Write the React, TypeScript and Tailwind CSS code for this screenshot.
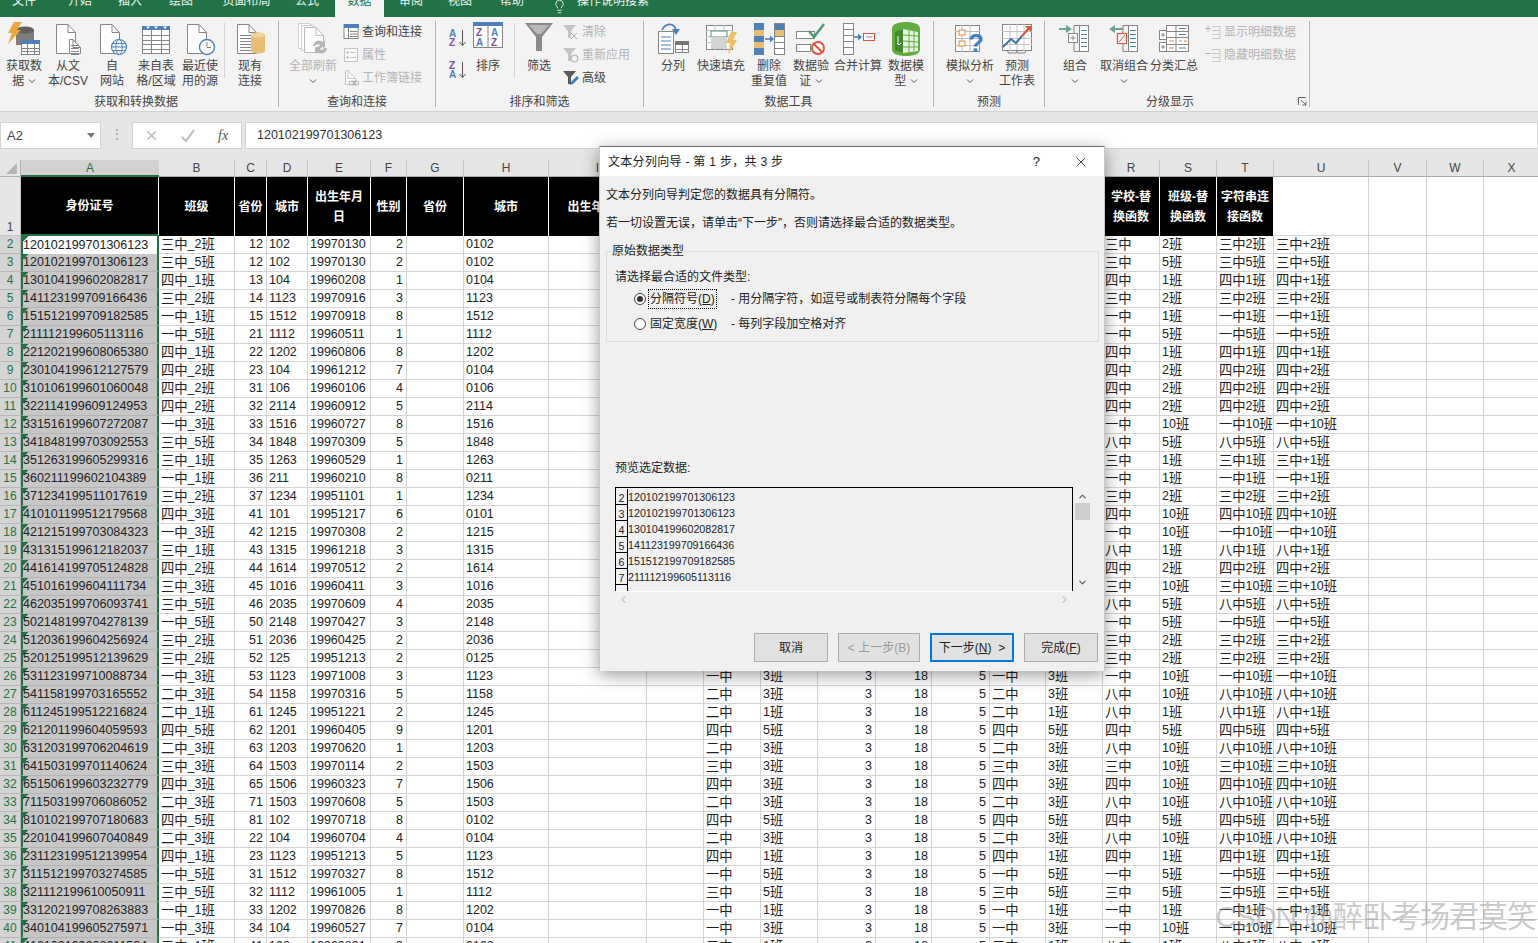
import type { ReactNode } from "react";
import { ChevronDown, ChevronLeft, ChevronRight, ChevronUp, Lightbulb, X } from "lucide-react";

const BLUE = "#4f81b9";
const GRAY = "#858585";
const TAN = "#e8bd74";
const TEAL = "#6fa58c";
const RED = "#d8553c";

// id|class|prov|city|birth|sex|code|school|grade
const RAW = [
  "120102199701306123|三中_2班|12|102|19970130|2|0102|三中|2班",
  "120102199701306123|三中_5班|12|102|19970130|2|0102|三中|5班",
  "130104199602082817|四中_1班|13|104|19960208|1|0104|四中|1班",
  "141123199709166436|三中_2班|14|1123|19970916|3|1123|三中|2班",
  "151512199709182585|一中_1班|15|1512|19970918|8|1512|一中|1班",
  "211112199605113116|一中_5班|21|1112|19960511|1|1112|一中|5班",
  "221202199608065380|四中_1班|22|1202|19960806|8|1202|四中|1班",
  "230104199612127579|四中_2班|23|104|19961212|7|0104|四中|2班",
  "310106199601060048|四中_2班|31|106|19960106|4|0106|四中|2班",
  "322114199609124953|四中_2班|32|2114|19960912|5|2114|四中|2班",
  "331516199607272087|一中_3班|33|1516|19960727|8|1516|一中|10班",
  "341848199703092553|三中_5班|34|1848|19970309|5|1848|八中|5班",
  "351263199605299316|三中_1班|35|1263|19960529|1|1263|三中|1班",
  "360211199602104389|一中_1班|36|211|19960210|8|0211|一中|1班",
  "371234199511017619|三中_2班|37|1234|19951101|1|1234|三中|2班",
  "410101199512179568|四中_3班|41|101|19951217|6|0101|四中|10班",
  "421215199703084323|一中_3班|42|1215|19970308|2|1215|一中|10班",
  "431315199612182037|三中_1班|43|1315|19961218|3|1315|八中|1班",
  "441614199705124828|四中_2班|44|1614|19970512|2|1614|四中|2班",
  "451016199604111734|三中_3班|45|1016|19960411|3|1016|三中|10班",
  "462035199706093741|三中_5班|46|2035|19970609|4|2035|八中|5班",
  "502148199704278139|一中_5班|50|2148|19970427|3|2148|一中|5班",
  "512036199604256924|三中_2班|51|2036|19960425|2|2036|三中|2班",
  "520125199512139629|三中_2班|52|125|19951213|2|0125|三中|2班",
  "531123199710088734|一中_3班|53|1123|19971008|3|1123|一中|10班",
  "541158199703165552|二中_3班|54|1158|19970316|5|1158|八中|10班",
  "611245199512216824|二中_1班|61|1245|19951221|2|1245|八中|1班",
  "621201199604059593|四中_5班|62|1201|19960405|9|1201|四中|5班",
  "631203199706204619|二中_3班|63|1203|19970620|1|1203|八中|10班",
  "641503199701140624|三中_3班|64|1503|19970114|2|1503|三中|10班",
  "651506199603232779|四中_3班|65|1506|19960323|7|1506|四中|10班",
  "711503199706086052|二中_3班|71|1503|19970608|5|1503|八中|10班",
  "810102199707180683|四中_5班|81|102|19970718|8|0102|四中|5班",
  "220104199607040849|二中_3班|22|104|19960704|4|0104|八中|10班",
  "231123199512139954|四中_1班|23|1123|19951213|5|1123|四中|1班",
  "311512199703274585|一中_5班|31|1512|19970327|8|1512|一中|5班",
  "321112199610050911|三中_5班|32|1112|19961005|1|1112|三中|5班",
  "331202199708263883|一中_1班|33|1202|19970826|8|1202|一中|1班",
  "340104199605275971|一中_3班|34|104|19960527|7|0104|一中|10班",
  "410102199608211534|二中_1班|41|102|19960821|3|0102|八中|1班",
];

const COLUMNS = "ABCDEFGHIJKLMNOPQRSTUVWX".split("");
const RIGHT_ALIGNED = new Set(["C", "F", "M", "N", "O"]);

const HEADERS: Record<string, string> = {
  A: "身份证号",
  B: "班级",
  C: "省份",
  D: "城市",
  E: "出生年月日",
  F: "性别",
  G: "省份",
  H: "城市",
  I: "出生年月日",
  J: "性别",
  K: "学校",
  L: "班级",
  M: "省份",
  N: "城市",
  O: "性别",
  P: "学校",
  Q: "班级",
  R: "学校-替换函数",
  S: "班级-替换函数",
  T: "字符串连接函数",
};

const rowValues = (raw: string): Record<string, string> => {
  const [id, cls, prov, city, birth, sex, code, school, grade] = raw.split("|");
  const [k, l] = cls.split("_");
  return {
    A: id, B: cls, C: prov, D: city, E: birth, F: sex, H: code,
    K: k, L: l, M: "3", N: "18", O: "5", P: k, Q: l,
    R: school, S: grade, T: school + grade, U: `${school}+${grade}`,
  };
};

// digits are narrower in the sheet font than the CJK next to them
const Mixed = ({ text }: { text: string }) => (
  <>
    {text.split(/([\u4e00-\u9fff]+)/).map((part, i) =>
      /[\u4e00-\u9fff]/.test(part) ? (
        <span key={i} className="text-[13.3px]">{part}</span>
      ) : (
        <span key={i}>{part}</span>
      )
    )}
  </>
);

/* ---------- icon pieces ---------- */

const Doc = ({ x = 0, y = 0, w = 20, h = 30, stroke = GRAY, fill = "#fff" }: { x?: number; y?: number; w?: number; h?: number; stroke?: string; fill?: string }) => (
  <g transform={`translate(${x} ${y})`} fill="none" stroke={stroke}>
    <path d={`M.5 .5H${w - 8}L${w - 0.5} 8.5V${h - 0.5}H.5Z`} fill={fill} />
    <path d={`M${w - 8} .5V8.5H${w - 0.5}`} />
  </g>
);

const Table = ({ x, y, w, h, rows, cols, head = BLUE, stroke = GRAY }: { x: number; y: number; w: number; h: number; rows: number; cols: number; head?: string; stroke?: string }) => (
  <g>
    <rect x={x + 0.5} y={y + 0.5} width={w - 1} height={h - 1} fill="#fff" stroke={stroke} />
    <rect x={x} y={y} width={w} height={4} fill={head} />
    {Array.from({ length: rows - 1 }, (_, i) => {
      const yy = Math.round(y + 4 + ((h - 4) * (i + 1)) / rows) + 0.5;
      return <path key={i} d={`M${x} ${yy}H${x + w}`} stroke={stroke} />;
    })}
    {Array.from({ length: cols - 1 }, (_, i) => {
      const xx = Math.round(x + (w * (i + 1)) / cols) + 0.5;
      return <path key={i} d={`M${xx} ${y + 4}V${y + h}`} stroke={stroke} />;
    })}
  </g>
);

const Lines = ({ x, y, w, n, gap = 3, color = GRAY }: { x: number; y: number; w: number; n: number; gap?: number; color?: string }) => (
  <path d={Array.from({ length: n }, (_, i) => `M${x} ${y + i * gap + 0.5}h${w}`).join("")} stroke={color} />
);

const Big = ({ children }: { children: ReactNode }) => (
  <svg width="34" height="34" viewBox="0 0 34 34">{children}</svg>
);

const Small = ({ children }: { children: ReactNode }) => (
  <svg width="16" height="16" viewBox="0 0 16 16" className="shrink-0">{children}</svg>
);

const GetDataIcon = () => (
  <Big>
    <path d="M9 9a9 3.5 0 0 1 18 0v14H9Z" fill="#7c7c7c" />
    <ellipse cx="18" cy="8" rx="9" ry="3.5" fill="#5f5f5f" />
    <polygon points="7,0 15,0 10,8 14,8 1,22 5,11 1,11" fill="#eba83d" />
    <Table x={14} y={18} w={19} h={15} rows={3} cols={3} />
  </Big>
);
const FromTextIcon = () => (
  <Big>
    <Doc x={5} y={2} w={20} h={30} />
    <Doc x={18} y={17} w={12} h={15} />
    <Lines x={20} y={23} w={8} n={4} />
  </Big>
);
const WebIcon = () => (
  <Big>
    <Doc x={5} y={2} w={20} h={30} />
    <circle cx="24" cy="25" r="7.5" fill="#fff" stroke={BLUE} strokeWidth="1.2" />
    <ellipse cx="24" cy="25" rx="3.2" ry="7.5" fill="none" stroke={BLUE} />
    <path d="M16.5 25h15M17.5 21.5h13M17.5 28.5h13" stroke={BLUE} />
  </Big>
);
const FromTableIcon = () => (
  <Big>
    <Table x={3} y={4} w={28} h={28} rows={5} cols={3} />
    <path d="M7 4.5h4l-2 2.5ZM15 4.5h4l-2 2.5ZM24 4.5h4l-2 2.5Z" fill="#fff" />
  </Big>
);
const RecentIcon = () => (
  <Big>
    <Doc x={4} y={2} w={20} h={30} />
    <circle cx="24" cy="25" r="7.5" fill="#fff" stroke={BLUE} strokeWidth="1.4" />
    <path d="M24 20v5.5h4" fill="none" stroke={GRAY} />
  </Big>
);
const ExistingIcon = () => (
  <Big>
    <Doc x={4} y={2} w={20} h={30} />
    <Lines x={7} y={13} w={14} n={6} />
    <path d="M18 13a7 2.5 0 0 1 14 0v16a7 2.5 0 0 1-14 0Z" fill={TAN} />
    <ellipse cx="25" cy="13" rx="7" ry="2.5" fill="#f0d39c" />
  </Big>
);
const RefreshAllIcon = () => (
  <Big>
    <Doc x={2} y={1} w={20} h={26} stroke="#cfcfcf" />
    <Doc x={5} y={3} w={20} h={26} stroke="#cfcfcf" />
    <Doc x={8} y={5} w={20} h={26} stroke="#bdbdbd" />
    <path d="M17 24a6 6 0 0 1 10-4l2-2v7h-7l2-2a3.4 3.4 0 0 0-5 1ZM31 26a6 6 0 0 1-10 4l-2 2v-7h7l-2 2a3.4 3.4 0 0 0 5-1Z" fill="#b5b5b5" />
  </Big>
);
const QueryIcon = () => (
  <Small>
    <rect x="1" y=".5" width="14" height="14" fill="#fff" stroke={GRAY} />
    <rect x="1" y="0" width="15" height="4" fill={BLUE} />
    <path d="M5.5 4v11M7 7.5h7M7 10h7M7 12.5h7" stroke={GRAY} />
  </Small>
);
const PropsIcon = () => (
  <Small>
    <rect x="1.5" y="1.5" width="13" height="13" fill="#fbfbfb" stroke="#c4c4c4" />
    <path d="M7 5.5h6M7 10.5h6" stroke="#c4c4c4" />
    <circle cx="4.5" cy="5.5" r="1.2" fill="#b8b8b8" />
    <circle cx="4.5" cy="10.5" r="1.2" fill="#b8b8b8" />
  </Small>
);
const LinksIcon = () => (
  <Small>
    <Doc x={2} y={0} w={11} h={15} stroke="#c4c4c4" />
    <ellipse cx="9" cy="13" rx="3" ry="2" fill="#f3f3f3" stroke="#a8a8a8" />
    <ellipse cx="13" cy="13" rx="3" ry="2" fill="none" stroke="#a8a8a8" />
  </Small>
);
const SortAZ = ({ down }: { down?: boolean }) => (
  <svg width="20" height="20" viewBox="0 0 20 20" className="block">
    <text x="1" y="9" fontSize="10" fontWeight="700" fill={down ? "#7f4fa8" : BLUE}>{down ? "Z" : "A"}</text>
    <text x="1" y="18" fontSize="10" fontWeight="700" fill={down ? BLUE : "#7f4fa8"}>{down ? "A" : "Z"}</text>
    <path d="M14.5 2v15M11.5 14l3 3.5 3-3.5" fill="none" stroke="#555" />
  </svg>
);
const SortIcon = () => (
  <svg width="30" height="30" viewBox="0 0 30 30">
    <rect x=".5" y=".5" width="29" height="25" fill="#fff" stroke={GRAY} />
    <rect width="30" height="4" fill={BLUE} />
    <path d="M15 4v22" stroke={GRAY} />
    <text x="3" y="14" fontSize="10" fontWeight="700" fill="#7f4fa8">Z</text>
    <text x="18" y="14" fontSize="10" fontWeight="700" fill={BLUE}>A</text>
    <text x="3" y="24" fontSize="10" fontWeight="700" fill={BLUE}>A</text>
    <text x="18" y="24" fontSize="10" fontWeight="700" fill="#7f4fa8">Z</text>
  </svg>
);
const FunnelIcon = () => (
  <svg width="30" height="30" viewBox="0 0 30 30">
    <path d="M1 1h28L18 15v14h-6V15Z" fill="#8a8a8a" />
    <path d="M5 3h20l-8 9h-4Z" fill="#b9b9b9" />
  </svg>
);
const SmallFunnel = ({ color, children }: { color: string; children?: ReactNode }) => (
  <Small>
    <path d="M0 1h13L8 7v7H5V7Z" fill={color} />
    {children}
  </Small>
);
const SplitIcon = () => (
  <Big>
    <rect x="2.5" y="9.5" width="15" height="22" fill="#fff" stroke={GRAY} />
    <path d="M5 15h10M5 19h10M5 23h10M5 27h10" stroke={BLUE} />
    <path d="M6 8C9 1 18 0 20 8" fill="none" stroke={BLUE} strokeWidth="1.6" />
    <path d="M16 7h8l-4 6Z" fill={BLUE} />
    <Table x={19} y={19} w={14} h={12} rows={2} cols={2} head="#777" />
  </Big>
);
const FlashIcon = () => (
  <Big>
    <rect x="2.5" y="3.5" width="26" height="24" fill="#fff" stroke={GRAY} />
    <path d="M2 8.5h27M2 14.5h27M2 20.5h27M11 3v25M20 3v25" stroke="#c0c0c0" />
    <rect x="7" y="9" width="16" height="6" fill="#fff" stroke="#4f9a72" />
    <rect x="7" y="15" width="16" height="12" fill="#d4d4d4" />
    <polygon points="27,10 33,10 29,18 33,18 24,33 26,21 22,21" fill="#eec062" />
  </Big>
);
const DedupeIcon = () => (
  <Big>
    <rect x="2" y="1" width="10" height="32" fill={BLUE} />
    <rect x="2" y="8" width="10" height="6" fill={TAN} />
    <rect x="2" y="20" width="10" height="6" fill={TAN} />
    <rect x="22.5" y="1.5" width="10" height="31" fill="#fff" stroke={GRAY} />
    <rect x="23" y="2" width="9" height="6" fill={BLUE} />
    <rect x="23" y="8" width="9" height="6" fill={TAN} />
    <path d="M23 14.5h9M23 20.5h9M23 26.5h9" stroke={GRAY} />
    <path d="M13 17h6" stroke={BLUE} strokeWidth="1.6" />
    <path d="M18 13.5l4 3.5-4 3.5Z" fill={BLUE} />
  </Big>
);
const ValidateIcon = () => (
  <Big>
    <rect x="2.5" y="9.5" width="18" height="7" fill="#fff" stroke={GRAY} />
    <rect x="2.5" y="22.5" width="14" height="7" fill="#fff" stroke={GRAY} />
    <path d="M15 9l5 6 10-13" fill="none" stroke="#4f9a72" strokeWidth="2.4" />
    <circle cx="24" cy="26" r="6" fill="#fff" stroke={RED} strokeWidth="2" />
    <path d="M20 22l8 8" stroke={RED} strokeWidth="2" />
  </Big>
);
const ConsolidateIcon = () => (
  <Big>
    <rect x="2.5" y="1.5" width="10" height="31" fill="#fff" stroke={GRAY} />
    <path d="M2 7.5h11M2 13.5h11M2 19.5h11M2 25.5h11" stroke={GRAY} />
    <path d="M13 15h5" stroke={BLUE} strokeWidth="1.6" />
    <path d="M17 11.5l4 3.5-4 3.5Z" fill={BLUE} />
    <rect x="22.5" y="11.5" width="11" height="7" fill="#fff" stroke={RED} />
    <path d="M25 15h6" stroke={GRAY} />
  </Big>
);
const ModelIcon = () => (
  <Big>
    <path d="M3 7C3 2 9 0 17 0s14 2 14 7v20c0 5-6 7-14 7S3 32 3 27Z" fill="#62ab3f" />
    <path d="M14 7l15 3v19l-15 2Z" fill="#fff" opacity=".85" />
    <path d="M14 13l15 1M14 19l15 1M14 25l15 0M20 8v22M25 9v20" stroke="#62ab3f" />
    <path d="M6 10l8-3v24l-8-3Z" fill="#3f8a2c" />
    <path d="M9 14v9M8 21l2 2 2-2" fill="none" stroke="#fff" />
  </Big>
);
const WhatIfIcon = () => (
  <Big>
    <rect x="2.5" y="3.5" width="24" height="26" fill="#fff" stroke={GRAY} />
    <path d="M2 9.5h25M2 16.5h25M2 23.5h25M9 3v27M17 3v27" stroke="#bdbdbd" />
    <rect x="6" y="8" width="6" height="5" fill="#fff" stroke="#e08a3c" />
    <rect x="6" y="19" width="6" height="5" fill="#fff" stroke="#e08a3c" />
    <text x="15" y="30" fontSize="26" fontWeight="700" fill="#3f7fc0">?</text>
  </Big>
);
const ForecastIcon = () => (
  <Big>
    <rect x="2.5" y="2.5" width="29" height="26" fill="#fff" stroke={GRAY} />
    <path d="M2 9.5h30M2 16.5h30M2 22.5h30M10 2v27M17 2v27M24 2v27" stroke="#c4c4c4" />
    <path d="M3 25l8-8 5 4 6-7" fill="none" stroke="#4171ab" strokeWidth="2" />
    <path d="M22 14l8-9" fill="none" stroke={RED} strokeWidth="2" />
    <path d="M25 4h6v6Z" fill={RED} />
    <path d="M8 28v3h8l1-3M17 28v3h8l1-3" fill="none" stroke={GRAY} />
  </Big>
);
const OutlineRows = ({ x }: { x: number }) => (
  <g>
    <rect x={x + 0.5} y="3.5" width="9" height="26" fill="#fff" stroke={GRAY} />
    <path d={`M${x + 2} 8.5h6M${x + 2} 12.5h6M${x + 2} 16.5h6M${x + 2} 20.5h6M${x + 2} 24.5h6`} stroke={BLUE} />
  </g>
);
const GroupIcon = () => (
  <Big>
    <path d="M21 3.5H16V29.5H21" fill="none" stroke={GRAY} />
    <rect x="10.5" y="11.5" width="9" height="9" fill="#fff" stroke={GRAY} />
    <path d="M12.5 16h5M15 13.5v5" stroke={GRAY} />
    <OutlineRows x={21} />
    <path d="M1 7h9" stroke={TEAL} strokeWidth="2" />
    <path d="M8 3l6 4-6 4Z" fill={TEAL} />
  </Big>
);
const UngroupIcon = () => (
  <Big>
    <path d="M21 3.5H16V29.5H21" fill="none" stroke={GRAY} />
    <rect x="10.5" y="11.5" width="9" height="10" fill="#fff" stroke={RED} strokeWidth="1.2" />
    <path d="M12 20l6-7" stroke={RED} />
    <OutlineRows x={21} />
    <path d="M7 7h9" stroke={TEAL} strokeWidth="2" />
    <path d="M8 3L2 7l6 4Z" fill={TEAL} />
  </Big>
);
const SubtotalIcon = () => (
  <Big>
    <rect x="2.5" y="8.5" width="7" height="9" fill="#fff" stroke={GRAY} />
    <rect x="2.5" y="20.5" width="7" height="9" fill="#fff" stroke={GRAY} />
    <path d="M4 13h4M6 11v4M4 25h4M6 23v4" stroke={GRAY} />
    <rect x="9.5" y="3.5" width="22" height="26" fill="#fff" stroke={GRAY} />
    <path d="M9 9.5h23M9 15.5h23M9 22.5h23M19 3v27" stroke={GRAY} />
    <path d="M22 6.5h7M22 12.5h7M22 26h7" stroke={BLUE} />
    <path d="M12 19h5M22 19h3M27 19h3M12 26h5" stroke="#e08a3c" />
  </Big>
);
const OutlineSmall = ({ minus }: { minus?: boolean }) => (
  <Small>
    <path d="M7 2.5h8M7 6.5h8M7 10.5h8M7 14.5h8M15 2v13" fill="none" stroke="#c9c9c9" />
    <path d={minus ? "M0 6.5h6" : "M0 4.5h6M3 1.5v6"} stroke="#b5b5b5" />
  </Small>
);

const Chev = () => (
  <svg width="8" height="5" viewBox="0 0 8 5" className="inline-block align-middle">
    <path d="M1 .5l3 3 3-3" fill="none" stroke="#555" />
  </svg>
);

/* ---------- ribbon ---------- */

const BigBtn = ({ w, icon, top, bottom, gray }: { w: number; icon: ReactNode; top: string; bottom?: ReactNode; gray?: boolean }) => (
  <div style={{ width: w }} className={`flex shrink-0 flex-col items-center leading-[15px] ${gray ? "text-[#b4b4b4]" : ""}`}>
    <div className="flex h-[38px] items-start pt-[1px]">{icon}</div>
    <span className="whitespace-nowrap">{top}</span>
    <span className="whitespace-nowrap">{bottom}</span>
  </div>
);

const SmallBtn = ({ icon, label, gray }: { icon: ReactNode; label: string; gray?: boolean }) => (
  <div className={`flex h-[20px] items-center gap-[3px] whitespace-nowrap ${gray ? "text-[#b4b4b4]" : ""}`}>
    {icon}
    <span>{label}</span>
  </div>
);

const Group = ({ width, label, children, className = "", labelClass = "" }: { width: number; label: string; children: ReactNode; className?: string; labelClass?: string }) => (
  <div style={{ width }} className="relative mt-[4px] flex h-[86px] shrink-0 flex-col border-r border-[#b4b4b4]">
    <div className={`flex h-[72px] shrink-0 ${className}`}>{children}</div>
    <div className={`mt-[1px] shrink-0 text-center leading-[16px] ${labelClass}`}>{label}</div>
  </div>
);

const Sep = () => <div className="mt-[2px] h-[55px] w-px shrink-0 bg-[#d4d4d4]" />;

const Ribbon = () => (
  <div className="flex h-[95px] shrink-0 border-b border-[#d2d2d2] bg-[#f3f3f3] text-[12px] text-[#444]">
    <Group width={279} label="获取和转换数据" className="pl-[2px]" labelClass="pr-[6px]">
      <BigBtn w={44} icon={<GetDataIcon />} top="获取数" bottom={<>据 <Chev /></>} />
      <BigBtn w={44} icon={<FromTextIcon />} top="从文" bottom="本/CSV" />
      <BigBtn w={44} icon={<WebIcon />} top="自" bottom="网站" />
      <BigBtn w={44} icon={<FromTableIcon />} top="来自表" bottom="格/区域" />
      <BigBtn w={44} icon={<RecentIcon />} top="最近使" bottom="用的源" />
      <div className="ml-[2px] mr-[3px]"><Sep /></div>
      <BigBtn w={44} icon={<ExistingIcon />} top="现有" bottom="连接" />
    </Group>
    <Group width={157} label="查询和连接" className="pl-[10px]">
      <BigBtn w={48} gray icon={<RefreshAllIcon />} top="全部刷新" bottom={<Chev />} />
      <div className="ml-[6px] flex flex-col gap-[3px] pt-[1px]">
        <SmallBtn icon={<QueryIcon />} label="查询和连接" />
        <SmallBtn gray icon={<PropsIcon />} label="属性" />
        <SmallBtn gray icon={<LinksIcon />} label="工作簿链接" />
      </div>
    </Group>
    <Group width={208} label="排序和筛选" className="pl-[12px]">
      <div className="flex w-[25px] flex-col gap-[12px] pt-[7px]">
        <SortAZ />
        <SortAZ down />
      </div>
      <BigBtn w={30} icon={<SortIcon />} top="排序" />
      <div className="ml-[11px]"><Sep /></div>
      <div className="ml-[9px]">
        <BigBtn w={30} icon={<FunnelIcon />} top="筛选" />
      </div>
      <div className="ml-[9px] flex flex-col gap-[3px] pt-[1px]">
        <SmallBtn gray label="清除" icon={<SmallFunnel color="#c4c4c4"><path d="M8 9l6 6M14 9l-6 6" stroke="#aaa" /></SmallFunnel>} />
        <SmallBtn gray label="重新应用" icon={<SmallFunnel color="#c4c4c4"><circle cx="11.5" cy="11.5" r="3.5" fill="none" stroke="#aaa" /></SmallFunnel>} />
        <SmallBtn label="高级" icon={<SmallFunnel color="#5a5a5a"><path d="M7 15l1-3 6-6 2 2-6 6Z" fill="#3f7fc0" /></SmallFunnel>} />
      </div>
    </Group>
    <Group width={290} label="数据工具" className="pl-[6px]">
      <BigBtn w={46} icon={<SplitIcon />} top="分列" />
      <BigBtn w={50} icon={<FlashIcon />} top="快速填充" />
      <BigBtn w={46} icon={<DedupeIcon />} top="删除" bottom="重复值" />
      <BigBtn w={38} icon={<ValidateIcon />} top="数据验" bottom={<>证 <Chev /></>} />
      <BigBtn w={56} icon={<ConsolidateIcon />} top="合并计算" />
      <BigBtn w={40} icon={<ModelIcon />} top="数据模" bottom={<>型 <Chev /></>} />
    </Group>
    <Group width={111} label="预测" className="pl-[12px]">
      <BigBtn w={48} icon={<WhatIfIcon />} top="模拟分析" bottom={<Chev />} />
      <BigBtn w={46} icon={<ForecastIcon />} top="预测" bottom="工作表" />
    </Group>
    <Group width={265} label="分级显示" className="pl-[10px]" labelClass="pr-[14px]">
      <BigBtn w={40} icon={<GroupIcon />} top="组合" bottom={<Chev />} />
      <BigBtn w={58} icon={<UngroupIcon />} top="取消组合" bottom={<Chev />} />
      <BigBtn w={42} icon={<SubtotalIcon />} top="分类汇总" />
      <div className="ml-[10px] flex flex-col gap-[3px] pt-[1px]">
        <SmallBtn gray icon={<OutlineSmall />} label="显示明细数据" />
        <SmallBtn gray icon={<OutlineSmall minus />} label="隐藏明细数据" />
      </div>
      <svg width="9" height="9" viewBox="0 0 9 9" className="absolute bottom-[1px] right-[2px]">
        <path d="M.5 8V.5H8M3 3l5 5M8 4.5V8H4.5" fill="none" stroke="#666" />
      </svg>
    </Group>
  </div>
);

const TABS: [string, number][] = [
  ["文件", 48], ["开始", 64], ["插入", 36], ["绘图", 66], ["页面布局", 65], ["公式", 56],
  ["数据", 49], ["审阅", 54], ["视图", 44], ["帮助", 60],
];

const TabBar = () => (
  <div className="flex h-[17px] shrink-0 overflow-hidden bg-[#217346] text-[12px] text-[#f2f2f2]">
    {TABS.map(([name, w]) => (
      <div
        key={name}
        style={{ width: w }}
        className={`flex h-[17px] justify-center leading-[16px] ${name === "数据" ? "bg-[#f3f3f3] text-[#217346]" : ""}`}
      >
        <span className="-mt-[7px]">{name}</span>
      </div>
    ))}
    <Lightbulb size={15} strokeWidth={1.4} className="ml-[10px] -mt-[1px]" />
    <span className="ml-[10px] -mt-[7px] leading-[16px]">操作说明搜索</span>
  </div>
);

const FormulaBar = () => (
  <div className="flex h-[48px] shrink-0 bg-[#e6e6e6] pt-[10px]">
    <div className="flex h-[27px] w-[101px] items-center justify-between border border-[#d4d4d4] bg-white pl-[6px] pr-[5px] text-[13px] text-[#444]">
      <span className="pt-px">A2</span>
      <span className="h-0 w-0 border-x-[4px] border-t-[5px] border-x-transparent border-t-[#777]" />
    </div>
    <div className="flex w-[31px] justify-center text-[12px] leading-[25px] text-[#999]">⋮</div>
    <div className="flex h-[27px] w-[110px] items-center border border-[#d4d4d4] bg-white text-[#b5b5b5]">
      <X size={15} className="ml-[11px]" />
      <svg width="16" height="14" viewBox="0 0 16 14" className="ml-[21px]">
        <path d="M2 8l4 4 8-11" fill="none" stroke="#bcbcbc" strokeWidth="2" />
      </svg>
      <span className="ml-[22px] font-['Liberation_Serif'] text-[14px] italic text-[#555]">fx</span>
    </div>
    <div className="ml-[3px] flex h-[27px] flex-1 items-center border border-[#d4d4d4] bg-white pl-[11px] text-[12.5px] text-[#333]">
      120102199701306123
    </div>
  </div>
);

/* ---------- sheet ---------- */

const Sheet = () => (
  <div className="grid min-h-0 flex-1 grid-cols-[21px_138px_76px_32px_41px_63px_36px_57px_85px_98px_57px_57px_57px_58px_56px_58px_56px_57px_57px_57px_57px_95px_58px_57px_56px] grid-rows-[17px_59px_repeat(40,18px)] overflow-hidden bg-white text-[12.5px] text-[#222]">
    {/* column headers */}
    <div className="flex items-end justify-end border-b border-r border-[#b0b0b0] bg-[#e6e6e6] pb-[2px] pr-[3px]">
      <span className="h-0 w-0 border-b-[11px] border-l-[11px] border-b-[#b5b5b5] border-l-transparent" />
    </div>
    {COLUMNS.map((c) => (
      <div
        key={c}
        className={
          c === "A"
            ? "border-b-2 border-[#217346] bg-[#d2d2d2] text-center text-[12px] leading-[16px] text-[#217346]"
            : "border-b border-r border-[#ababab] border-r-[#c6c6c6] bg-[#e6e6e6] text-center text-[12px] leading-[17px] text-[#444]"
        }
      >
        {c}
      </div>
    ))}

    {/* row 1 */}
    <div className="flex items-end justify-center border-b border-r border-[#c6c6c6] bg-[#e6e6e6] text-[12px] leading-[16px] text-[#444]">1</div>
    {COLUMNS.map((c) =>
      HEADERS[c] ? (
        <div
          key={c}
          className={`flex items-center justify-center border-r border-white bg-black px-[3px] text-center text-[12px] font-bold leading-[20px] text-white ${c === "A" ? "border-b-2 border-b-[#217346]" : ""}`}
        >
          <span>{HEADERS[c]}</span>
        </div>
      ) : (
        <div key={c} className="border-b border-r border-[#d4d4d4]" />
      )
    )}

    {/* data rows */}
    {RAW.map((raw, idx) => {
      const values = rowValues(raw);
      return [
        <div
          key={`h${idx}`}
          className="border-b border-r border-[#b8b8b8] bg-[#d4d4d4] text-center text-[12px] leading-[17px] text-[#217346]"
        >
          {idx + 2}
        </div>,
        ...COLUMNS.map((c) => {
          if (c === "A") {
            return (
              <div
                key={`${idx}${c}`}
                className={`flex items-center overflow-hidden whitespace-nowrap border-x-2 border-[#217346] bg-[linear-gradient(135deg,#217346_4px,transparent_4px)] ${idx === 0 ? "bg-white" : "border-b border-b-[#b4b4b4] bg-[#c6c6c6]"}`}
              >
                {values.A}
              </div>
            );
          }
          return (
            <div
              key={`${idx}${c}`}
              className={`flex items-center overflow-hidden whitespace-nowrap border-b border-r border-[#d4d4d4] ${RIGHT_ALIGNED.has(c) ? "justify-end pr-[3px]" : "pl-[2px]"}`}
            >
              {values[c] ? <Mixed text={values[c]} /> : null}
            </div>
          );
        }),
      ];
    })}
  </div>
);

/* ---------- dialog ---------- */

const PREVIEW = ["120102199701306123", "120102199701306123", "130104199602082817", "141123199709166436", "151512199709182585", "211112199605113116"];

const Radio = ({ on }: { on?: boolean }) => (
  <span className="flex h-[12px] w-[12px] shrink-0 items-center justify-center rounded-full border border-[#444] bg-white">
    {on && <span className="h-[6px] w-[6px] rounded-full bg-[#333]" />}
  </span>
);

const DlgButton = ({ w, children, disabled, primary }: { w: number; children: ReactNode; disabled?: boolean; primary?: boolean }) => (
  <div
    style={{ width: w }}
    className={`flex h-[29px] items-center justify-center bg-[#e1e1e1] ${primary ? "border-2 border-[#0078d7]" : "border border-[#adadad]"} ${disabled ? "text-[#9a9a9a]" : ""}`}
  >
    {children}
  </div>
);

const WizardDialog = () => (
  <div className="absolute left-[599px] top-[146px] h-[525px] w-[506px] border-x border-t border-x-[#c8c8c8] border-t-[#6e6e6e] bg-[#f0f0f0] text-[12px] text-[#222] shadow-[0_4px_16px_rgba(0,0,0,0.4)]">
    <div className="flex h-[29px] items-center justify-between bg-white pl-[8px] pr-[15px]">
      <span className="tracking-[0.3px]">文本分列向导 - 第 1 步，共 3 步</span>
      <div className="flex items-center gap-[33px]">
        <span className="text-[13px]">?</span>
        <X size={16} strokeWidth={1.2} />
      </div>
    </div>
    <div className="pl-[6px] pt-[11px] leading-[16px]">
      <p>文本分列向导判定您的数据具有分隔符。</p>
      <p className="mt-[12px]">若一切设置无误，请单击“下一步”，否则请选择最合适的数据类型。</p>
      <fieldset className="mt-[12px] h-[99px] w-[493px] border border-[#dcdcdc] pl-[8px]">
        <legend className="-ml-[3px] leading-[16px]">原始数据类型</legend>
        <p className="mt-[10px]">请选择最合适的文件类型:</p>
        <div className="ml-[19px] mt-[4px] flex h-[20px] items-center">
          <Radio on />
          <span className="ml-[2px] flex h-[20px] w-[69px] shrink-0 items-center whitespace-nowrap border border-dotted border-black pl-[1px]">
            分隔符号(<span className="underline">D</span>)
          </span>
          <span className="ml-[14px]">- 用分隔字符，如逗号或制表符分隔每个字段</span>
        </div>
        <div className="ml-[19px] mt-[5px] flex h-[20px] items-center">
          <Radio />
          <span className="ml-[2px] w-[69px] shrink-0 whitespace-nowrap pl-[2px]">
            固定宽度(<span className="underline">W</span>)
          </span>
          <span className="ml-[14px]">- 每列字段加空格对齐</span>
        </div>
      </fieldset>
      <p className="ml-[9px] mt-[118px]">预览选定数据:</p>
      <div className="ml-[9px] mt-[11px] flex">
        <div className="h-[104px] w-[458px] overflow-hidden border-x border-t border-black bg-[#f0f0f0] pt-px text-[10.7px] leading-[16px]">
          {[...PREVIEW, ""].map((id, i) => (
            <div key={i} className="flex h-[16px]">
              <span className="flex w-[12px] shrink-0 items-end justify-center border-b border-r border-black leading-[12px]">{id ? i + 2 : ""}</span>
              <span>{id}</span>
            </div>
          ))}
        </div>
        <div className="ml-px flex h-[104px] w-[16px] flex-col items-center justify-between pt-[4px] text-[#555]">
          <ChevronUp size={11} strokeWidth={2.5} />
          <div className="mb-[56px] -mt-[1px] h-[17px] w-[15px] bg-[#cdcdcd]" />
          <ChevronDown size={11} strokeWidth={2.5} className="mb-[3px]" />
        </div>
      </div>
      <div className="ml-[9px] flex h-[16px] w-[458px] items-center justify-between border-t border-white pl-[3px] pr-[3px] text-[#c4c4c4]">
        <ChevronLeft size={11} strokeWidth={2.5} />
        <ChevronRight size={11} strokeWidth={2.5} />
      </div>
      <div className="mt-[26px] flex justify-end gap-[10px] pr-[6px]">
        <DlgButton w={74}>取消</DlgButton>
        <DlgButton w={82} disabled>&lt; 上一步(B)</DlgButton>
        <DlgButton w={84} primary>
          <span>下一步(<span className="underline">N</span>) &nbsp;&gt;</span>
        </DlgButton>
        <DlgButton w={74}>完成(<span className="underline">F</span>)</DlgButton>
      </div>
    </div>
  </div>
);

export default function App() {
  return (
    <div className="relative flex h-[943px] w-[1538px] flex-col overflow-hidden bg-white font-['Liberation_Sans','Noto_Sans_CJK_SC',sans-serif]">
      <TabBar />
      <Ribbon />
      <FormulaBar />
      <Sheet />
      <WizardDialog />
      <div className="pointer-events-none absolute bottom-[6px] right-[2px] whitespace-nowrap text-[30px] leading-[40px] tracking-[-1px] text-[rgba(150,150,150,0.5)]">
        CSDN @醉卧考场君莫笑
      </div>
    </div>
  );
}
